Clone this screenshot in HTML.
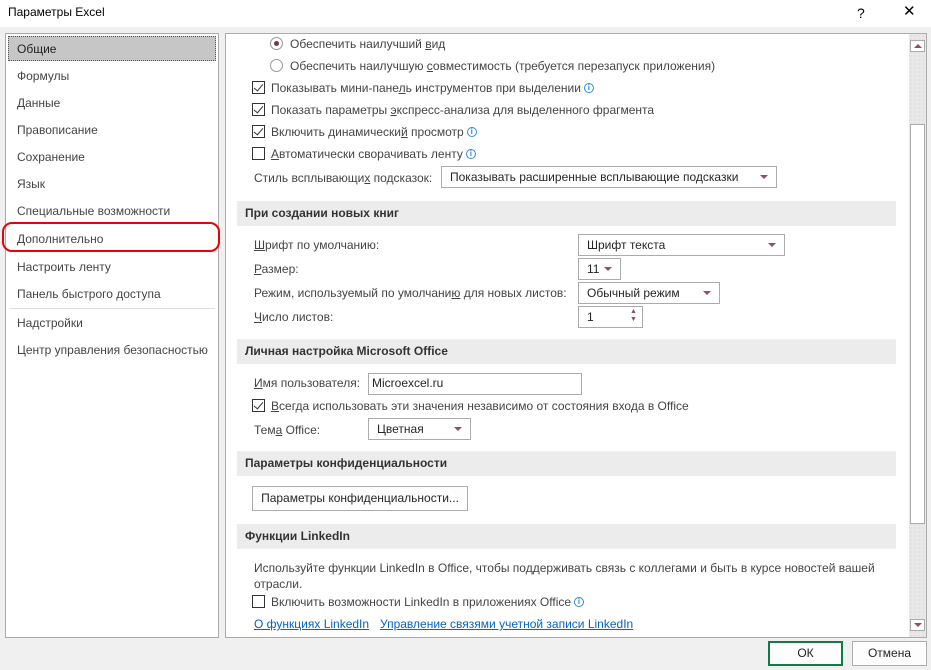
<!DOCTYPE html>
<html><head><meta charset="utf-8">
<style>
*{box-sizing:border-box;margin:0;padding:0}
body{width:931px;height:670px;background:#f0f0f0;font-family:"Liberation Sans","DejaVu Sans",sans-serif;font-size:12px;color:#444;position:relative;overflow:hidden}
.a{position:absolute;white-space:nowrap;line-height:16px}
.t{color:#262626}
.title{position:absolute;left:0;top:0;width:931px;height:27px;background:#fff}
.left{position:absolute;left:5px;top:33px;width:214px;height:605px;background:#fff;border:1px solid #ababab}
.right{position:absolute;left:225px;top:33px;width:702px;height:605px;background:#fff;border:1px solid #ababab}
.hdr{position:absolute;left:237px;width:659px;height:25px;background:#ececec;font-weight:bold;color:#333;padding-left:8px;line-height:25px}
.cb{position:absolute;width:13px;height:13px;border:1px solid #333;background:#fff}
.cb.c::after{content:"";position:absolute;left:3px;top:0px;width:4px;height:8px;border-right:1.6px solid #333;border-bottom:1.6px solid #333;transform:rotate(40deg)}
.rd{position:absolute;width:13px;height:13px;border:1px solid #999;border-radius:50%;background:#fff}
.rd.c::after{content:"";position:absolute;left:3px;top:3px;width:5px;height:5px;border-radius:50%;background:#6b3c4a}
.box{position:absolute;border:1px solid #ababab;background:#fff;height:22px;line-height:20px;padding-left:8px;color:#262626}
.dd::after{content:"";position:absolute;right:8px;top:8px;border-left:4px solid transparent;border-right:4px solid transparent;border-top:4px solid #8e4f5e}
.i{display:inline-block;width:10px;height:10px;border:1px solid #2e8ae6;border-radius:50%;font-size:8px;line-height:8px;text-align:center;color:#2e8ae6;vertical-align:2px;margin-left:3px;font-weight:bold}
u{text-decoration:underline}
.lk{color:#0563c1;text-decoration:underline}
.btn{position:absolute;background:#fdfdfd;border:1px solid #adadad;text-align:center;color:#262626}
</style></head><body>
<div class="title"></div>
<div class="a" style="left:8px;top:4px;color:#000;font-size:12px">Параметры Excel</div>
<div class="a" style="left:857px;top:5px;color:#000;font-size:14px">?</div>
<div class="a" style="left:903px;top:4px;color:#000;font-size:15px">✕</div>

<div class="left"></div>
<div style="position:absolute;left:8px;top:36px;width:208px;height:25px;background:#c6c6c6;border:1px dotted #555"></div>
<div class="a t" style="left:17px;top:41px;color:#222">Общие</div>
<div class="a" style="left:17px;top:68px">Формулы</div>
<div class="a" style="left:17px;top:95px">Данные</div>
<div class="a" style="left:17px;top:122px">Правописание</div>
<div class="a" style="left:17px;top:149px">Сохранение</div>
<div class="a" style="left:17px;top:176px">Язык</div>
<div class="a" style="left:17px;top:203px">Специальные возможности</div>
<div class="a" style="left:17px;top:231px">Дополнительно</div>
<div style="position:absolute;left:2px;top:222px;width:218px;height:30px;border:2.5px solid #e8000b;border-radius:10px"></div>
<div class="a" style="left:17px;top:259px">Настроить ленту</div>
<div class="a" style="left:17px;top:286px">Панель быстрого доступа</div>
<div style="position:absolute;left:10px;top:308px;width:205px;height:1px;background:#ddd"></div>
<div class="a" style="left:17px;top:315px">Надстройки</div>
<div class="a" style="left:17px;top:342px">Центр управления безопасностью</div>

<div class="right"></div>
<div style="position:absolute;left:909px;top:34px;width:17px;height:603px;background:#e8e8e8;background-image:radial-gradient(#cfcfcf 0.7px,transparent 0.8px);background-size:4px 4px"></div>
<div style="position:absolute;left:910px;top:40px;width:15px;height:12px;background:#fff;border:1px solid #ababab"></div>
<div style="position:absolute;left:914px;top:44px;border-left:4px solid transparent;border-right:4px solid transparent;border-bottom:4px solid #8e4f5e"></div>
<div style="position:absolute;left:910px;top:124px;width:15px;height:400px;background:#fff;border:1px solid #ababab"></div>
<div style="position:absolute;left:910px;top:619px;width:15px;height:12px;background:#fff;border:1px solid #ababab"></div>
<div style="position:absolute;left:914px;top:623px;border-left:4px solid transparent;border-right:4px solid transparent;border-top:4px solid #8e4f5e"></div>

<div class="rd c" style="left:270px;top:37px"></div>
<div class="a" style="left:290px;top:36px">Обеспечить наилучший <u>в</u>ид</div>
<div class="rd" style="left:270px;top:59px"></div>
<div class="a" style="left:290px;top:58px">Обеспечить наилучшую <u>с</u>овместимость (требуется перезапуск приложения)</div>
<div class="cb c" style="left:252px;top:81px"></div>
<div class="a" style="left:271px;top:80px">Показывать мини-пане<u>л</u>ь инструментов при выделении<span class="i">i</span></div>
<div class="cb c" style="left:252px;top:103px"></div>
<div class="a" style="left:271px;top:102px">Показать параметры <u>э</u>кспресс-анализа для выделенного фрагмента</div>
<div class="cb c" style="left:252px;top:125px"></div>
<div class="a" style="left:271px;top:124px">Включить динамически<u>й</u> просмотр<span class="i">i</span></div>
<div class="cb" style="left:252px;top:147px"></div>
<div class="a" style="left:271px;top:146px"><u>А</u>втоматически сворачивать ленту<span class="i">i</span></div>
<div class="a" style="left:254px;top:170px">Стиль всплывающи<u>х</u> подсказок:</div>
<div class="box dd" style="left:441px;top:166px;width:336px">Показывать расширенные всплывающие подсказки</div>

<div class="hdr" style="top:201px">При создании новых книг</div>
<div class="a" style="left:254px;top:237px"><u>Ш</u>рифт по умолчанию:</div>
<div class="box dd" style="left:578px;top:234px;width:207px">Шрифт текста</div>
<div class="a" style="left:254px;top:261px"><u>Р</u>азмер:</div>
<div class="box dd" style="left:578px;top:258px;width:43px">11</div>
<div class="a" style="left:254px;top:285px">Режим, используемый по умолчани<u>ю</u> для новых листов:</div>
<div class="box dd" style="left:578px;top:282px;width:142px">Обычный режим</div>
<div class="a" style="left:254px;top:309px"><u>Ч</u>исло листов:</div>
<div class="box" style="left:578px;top:306px;width:65px">1</div>
<div class="a" style="left:630px;top:308px;font-size:7px;line-height:8px;color:#8e4f5e">▲<br>▼</div>

<div class="hdr" style="top:339px">Личная настройка Microsoft Office</div>
<div class="a" style="left:254px;top:375px"><u>И</u>мя пользователя:</div>
<div class="box" style="left:368px;top:373px;width:214px;padding-left:3px;line-height:18px">Microexcel.ru</div>
<div class="cb c" style="left:252px;top:399px"></div>
<div class="a" style="left:271px;top:398px"><u>В</u>сегда использовать эти значения независимо от состояния входа в Office</div>
<div class="a" style="left:254px;top:422px">Тем<u>а</u> Office:</div>
<div class="box dd" style="left:368px;top:418px;width:103px">Цветная</div>

<div class="hdr" style="top:451px">Параметры конфиденциальности</div>
<div class="btn" style="left:252px;top:486px;width:216px;height:25px;line-height:23px">Параметры конфиденциальности...</div>

<div class="hdr" style="top:524px">Функции LinkedIn</div>
<div class="a" style="left:254px;top:560px">Используйте функции LinkedIn в Office, чтобы поддерживать связь с коллегами и быть в курсе новостей вашей</div>
<div class="a" style="left:254px;top:576px">отрасли.</div>
<div class="cb" style="left:252px;top:595px"></div>
<div class="a" style="left:271px;top:594px">Включить возможности LinkedIn в приложениях Office<span class="i">i</span></div>
<div class="a lk" style="left:254px;top:616px">О функциях LinkedIn</div>
<div class="a lk" style="left:380px;top:616px">Управление связями учетной записи LinkedIn</div>

<div class="btn" style="left:768px;top:641px;width:75px;height:25px;line-height:21px;border:2px solid #107c41">ОК</div>
<div class="btn" style="left:852px;top:641px;width:75px;height:25px;line-height:23px">Отмена</div>
</body></html>
